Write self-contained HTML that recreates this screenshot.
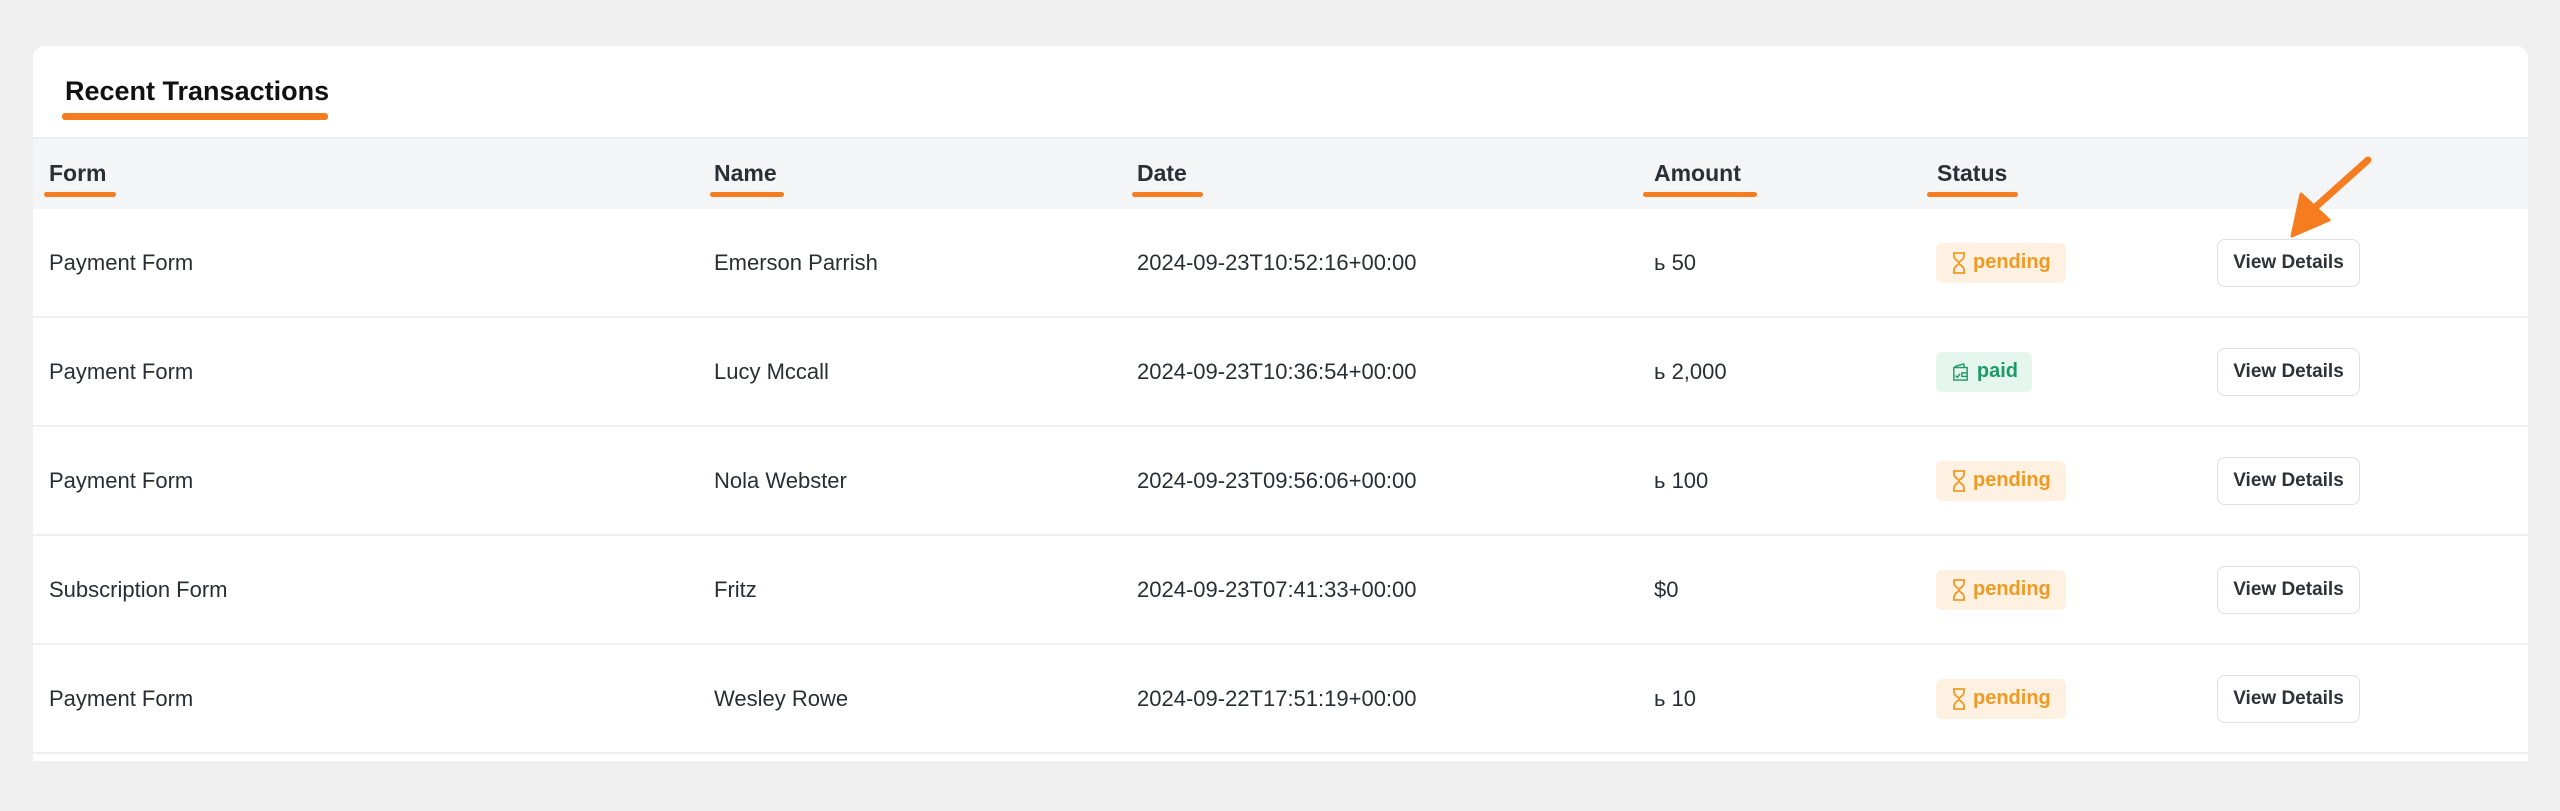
<!DOCTYPE html>
<html><head><meta charset="utf-8"><style>
*{margin:0;padding:0;box-sizing:border-box}
body{width:2560px;height:811px;background:#f0f0f0;font-family:"Liberation Sans",sans-serif;color:#1f2329;position:relative;overflow:hidden}
.card{position:absolute;left:33px;top:46px;width:2495px;height:715px;background:#fff;border-radius:12px 12px 0 0;overflow:hidden}
.title{position:absolute;left:32px;top:30px;font-size:27px;font-weight:bold;color:#111}
.ul{position:absolute;background:#f57c1f;border-radius:3px;height:6px}
.head{position:absolute;left:0;top:91px;width:100%;height:72px;background:#f3f5f7;border-top:2px solid #eceef0}
.h{position:absolute;top:21px;font-size:23px;font-weight:bold;color:#2a2f36}
.row{position:absolute;left:0;width:100%;height:109px;border-bottom:2px solid #eef0f2}
.c{position:absolute;top:50%;transform:translateY(-50%);font-size:22px;color:#2a2e33;white-space:nowrap}
.badge{position:absolute;top:50%;transform:translateY(-50%);height:40px;border-radius:6px;font-size:20px;font-weight:bold;display:flex;align-items:center;padding:0 14px 0 16px;gap:7px}
.pend{background:#fef1e2;color:#ef9a25;width:130px}
.paid{background:#e5f6ee;color:#1d9a68;width:96px}
.btn{position:absolute;left:2184px;top:50%;transform:translateY(-50%);width:143px;height:48px;border:1.5px solid #dcdfe3;border-radius:8px;background:#fff;font-size:19px;font-weight:bold;color:#2e3238;display:flex;align-items:center;justify-content:center}
</style></head><body>
<div class="card">
<div class="title">Recent Transactions</div>
<div class="ul" style="left:29px;top:67px;width:266px;height:7px"></div>
<div class="head">
<div class="h" style="left:16px">Form</div>
<div class="h" style="left:681px">Name</div>
<div class="h" style="left:1104px">Date</div>
<div class="h" style="left:1621px">Amount</div>
<div class="h" style="left:1904px">Status</div>
</div>
<div class="ul" style="left:11px;top:146px;width:72px;height:5px"></div>
<div class="ul" style="left:677px;top:146px;width:74px;height:5px"></div>
<div class="ul" style="left:1099px;top:146px;width:71px;height:5px"></div>
<div class="ul" style="left:1610px;top:146px;width:114px;height:5px"></div>
<div class="ul" style="left:1894px;top:146px;width:91px;height:5px"></div>

<div class="row" style="top:163px">
<div class="c" style="left:16px">Payment Form</div><div class="c" style="left:681px">Emerson Parrish</div><div class="c" style="left:1104px">2024-09-23T10:52:16+00:00</div><div class="c" style="left:1621px">ь 50</div>
<div class="badge pend" style="left:1903px"><svg width="14" height="22" viewBox="0 0 14 22" fill="none" stroke="#ef9a25" stroke-width="1.8"><path d="M1 1h12M1 21h12M2 1v3c0 4 5 5 5 7c0 2-5 3-5 7v3M12 1v3c0 4-5 5-5 7c0 2 5 3 5 7v3"/></svg>pending</div>
<div class="btn">View Details</div></div>

<div class="row" style="top:272px">
<div class="c" style="left:16px">Payment Form</div><div class="c" style="left:681px">Lucy Mccall</div><div class="c" style="left:1104px">2024-09-23T10:36:54+00:00</div><div class="c" style="left:1621px">ь 2,000</div>
<div class="badge paid" style="left:1903px"><svg width="20" height="22" viewBox="0 0 20 22" fill="none" stroke="#1d9a68" stroke-width="1.6"><path d="M3 5l10-3 1 4M2 6h15v14H2zM11 12h6v4h-6zM4 15l2 2 3-4"/></svg>paid</div>
<div class="btn">View Details</div></div>

<div class="row" style="top:381px">
<div class="c" style="left:16px">Payment Form</div><div class="c" style="left:681px">Nola Webster</div><div class="c" style="left:1104px">2024-09-23T09:56:06+00:00</div><div class="c" style="left:1621px">ь 100</div>
<div class="badge pend" style="left:1903px"><svg width="14" height="22" viewBox="0 0 14 22" fill="none" stroke="#ef9a25" stroke-width="1.8"><path d="M1 1h12M1 21h12M2 1v3c0 4 5 5 5 7c0 2-5 3-5 7v3M12 1v3c0 4-5 5-5 7c0 2 5 3 5 7v3"/></svg>pending</div>
<div class="btn">View Details</div></div>

<div class="row" style="top:490px">
<div class="c" style="left:16px">Subscription Form</div><div class="c" style="left:681px">Fritz</div><div class="c" style="left:1104px">2024-09-23T07:41:33+00:00</div><div class="c" style="left:1621px">$0</div>
<div class="badge pend" style="left:1903px"><svg width="14" height="22" viewBox="0 0 14 22" fill="none" stroke="#ef9a25" stroke-width="1.8"><path d="M1 1h12M1 21h12M2 1v3c0 4 5 5 5 7c0 2-5 3-5 7v3M12 1v3c0 4-5 5-5 7c0 2 5 3 5 7v3"/></svg>pending</div>
<div class="btn">View Details</div></div>

<div class="row" style="top:599px">
<div class="c" style="left:16px">Payment Form</div><div class="c" style="left:681px">Wesley Rowe</div><div class="c" style="left:1104px">2024-09-22T17:51:19+00:00</div><div class="c" style="left:1621px">ь 10</div>
<div class="badge pend" style="left:1903px"><svg width="14" height="22" viewBox="0 0 14 22" fill="none" stroke="#ef9a25" stroke-width="1.8"><path d="M1 1h12M1 21h12M2 1v3c0 4 5 5 5 7c0 2-5 3-5 7v3M12 1v3c0 4-5 5-5 7c0 2 5 3 5 7v3"/></svg>pending</div>
<div class="btn">View Details</div></div>
</div>
<svg style="position:absolute;left:0;top:0" width="2560" height="811">
<path d="M2368 160L2310 212" stroke="#f57c1f" stroke-width="7" stroke-linecap="round"/>
<path d="M2292 236L2301 194L2329 220Z" fill="#f57c1f" stroke="#f57c1f" stroke-width="3" stroke-linejoin="round"/>
</svg>
</body></html>
